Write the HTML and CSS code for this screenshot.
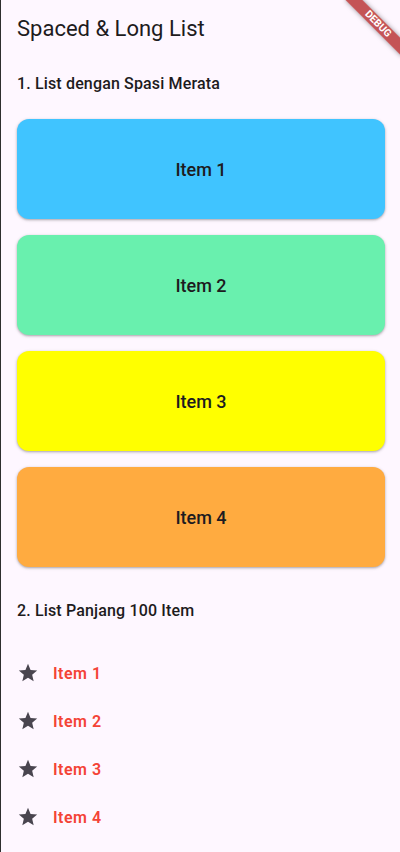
FILE: index.html
```html
<!DOCTYPE html>
<html lang="id">
<head>
<meta charset="utf-8">
<title>Spaced &amp; Long List</title>
<link rel="stylesheet" href="styles.css">
</head>
<body>
<div class="screen">
  <header class="appbar">Spaced &amp; Long List</header>
  <h2 class="section-title first">1. List dengan Spasi Merata</h2>
  <div class="cards">
    <div class="card blue">Item 1</div>
    <div class="card green">Item 2</div>
    <div class="card yellow">Item 3</div>
    <div class="card orange">Item 4</div>
  </div>
  <h2 class="section-title second">2. List Panjang 100 Item</h2>
  <ul class="list">
    <li class="tile"><svg class="star" viewBox="0 0 24 24"><path d="M12 17.27L18.18 21l-1.64-7.03L22 9.24l-7.19-.61L12 2 9.19 8.63 2 9.24l5.46 4.73L5.82 21z"/></svg><span class="tile-text">Item 1</span></li>
    <li class="tile"><svg class="star" viewBox="0 0 24 24"><path d="M12 17.27L18.18 21l-1.64-7.03L22 9.24l-7.19-.61L12 2 9.19 8.63 2 9.24l5.46 4.73L5.82 21z"/></svg><span class="tile-text">Item 2</span></li>
    <li class="tile"><svg class="star" viewBox="0 0 24 24"><path d="M12 17.27L18.18 21l-1.64-7.03L22 9.24l-7.19-.61L12 2 9.19 8.63 2 9.24l5.46 4.73L5.82 21z"/></svg><span class="tile-text">Item 3</span></li>
    <li class="tile"><svg class="star" viewBox="0 0 24 24"><path d="M12 17.27L18.18 21l-1.64-7.03L22 9.24l-7.19-.61L12 2 9.19 8.63 2 9.24l5.46 4.73L5.82 21z"/></svg><span class="tile-text">Item 4</span></li>
  </ul>
  <div class="banner">DEBUG</div>
</div>
</body>
</html>
```
FILE: styles.css
```css
html, body {
  margin: 0;
  padding: 0;
  overflow: hidden;
  background: #fef7ff;
}
body {
  font-family: Roboto, "Noto Sans", sans-serif;
  color: #1d1b20;
}
.screen {
  position: relative;
  height: 852px;
  overflow: hidden;
  border-left: 1px solid #2e2e2e;
  box-sizing: border-box;
  background: #fef7ff;
}
.appbar {
  height: 56px;
  display: flex;
  align-items: center;
  padding-left: 16px;
  font-size: 22px;
  font-weight: 400;
  color: #1d1b20;
}
.section-title {
  margin: 0;
  padding: 0 16px;
  font-size: 16px;
  font-weight: 500;
  line-height: 24px;
  letter-spacing: 0.15px;
  color: #1d1b20;
}
.section-title.first {
  margin-top: 16px;
}
.cards {
  display: flex;
  flex-direction: column;
  gap: 16px;
  padding: 23px 0 0 16px;
}
.card {
  width: 368px;
  height: 100px;
  border-radius: 12px;
  display: flex;
  align-items: center;
  justify-content: center;
  font-size: 18px;
  font-weight: 500;
  color: #1d1b20;
  box-shadow: 0 1px 2px rgba(0,0,0,0.22), 0 1px 3px 1px rgba(0,0,0,0.1);
}
.blue { background: #40c4ff; }
.green { background: #69f0ae; }
.yellow { background: #ffff00; }
.orange { background: #ffab40; }
.section-title.second {
  margin-top: 32px;
}
.list {
  list-style: none;
  margin: 26px 0 0;
  padding: 0;
}
.tile {
  height: 48px;
  display: flex;
  align-items: center;
  padding-left: 16px;
}
.star {
  width: 22px;
  height: 22px;
  fill: #49454f;
  flex: none;
}
.tile-text {
  margin-left: 14px;
  font-size: 16px;
  font-weight: 600;
  letter-spacing: 0.5px;
  color: #f44336;
}
.banner {
  position: absolute;
  left: 337px;
  top: 18px;
  width: 80px;
  height: 12px;
  transform: rotate(45deg);
  background: rgba(176, 30, 30, 0.75);
  box-shadow: 0 0 5px rgba(0,0,0,0.4);
  color: #fff;
  font-size: 10.2px;
  font-weight: 700;
  line-height: 12px;
  text-align: center;
}
```
